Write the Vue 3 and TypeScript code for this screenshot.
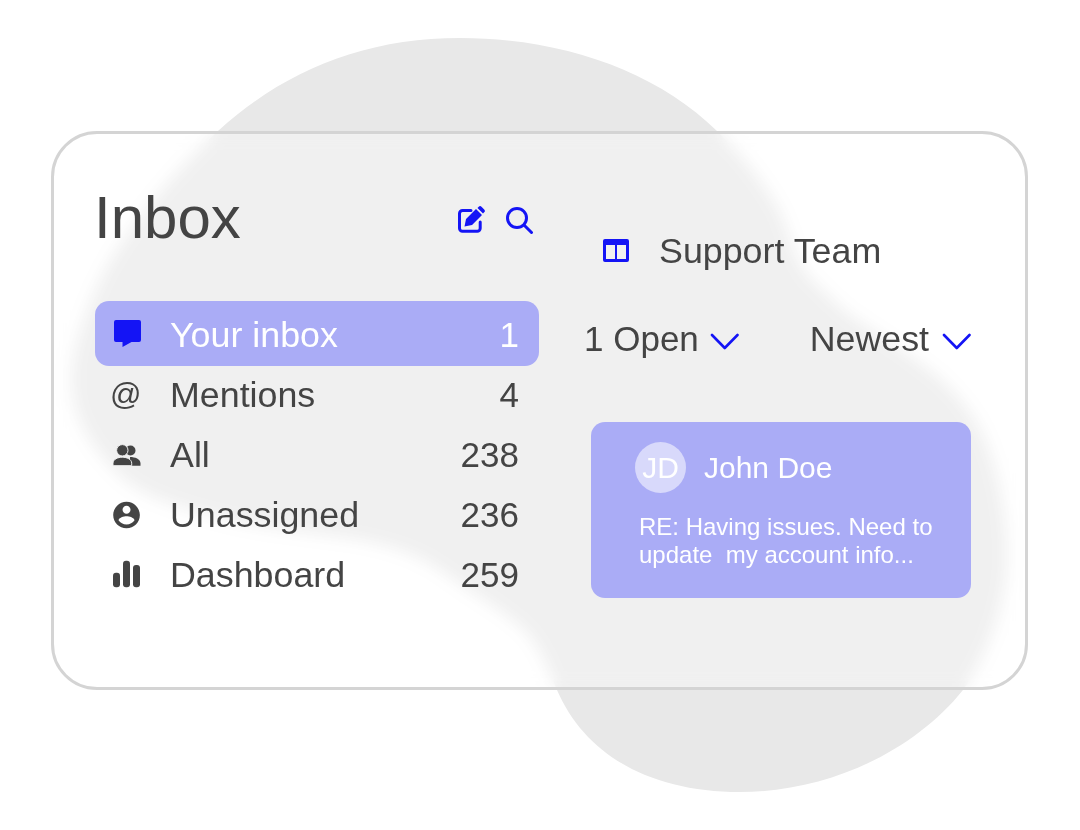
<script setup lang="ts">
interface Row { key: string; label: string; count: number; active?: boolean }
const rows: Row[] = [
  { key: 'chat', label: 'Your inbox', count: 1, active: true },
  { key: 'at', label: 'Mentions', count: 4 },
  { key: 'people', label: 'All', count: 238 },
  { key: 'user', label: 'Unassigned', count: 236 },
  { key: 'bars', label: 'Dashboard', count: 259 },
]
</script>

<template>
  <div class="page">
    <svg class="blob" width="1080" height="830" viewBox="0 0 1080 830" aria-hidden="true">
      <path d="M460 38C560 38 655 70 717 131C750 163 768 190 780 212C790 235 795 262 812 280C828 295 840 308 853 317C875 332 900 347 920 363C945 380 960 398 973 417C995 450 1007 510 1007 555C1007 600 990 650 963 690C915 750 830 792 740 792C650 792 585 755 557 690C548 668 540 648 527 633C512 618 495 607 473 593C455 581 437 566 417 557C400 549 380 544 360 540C310 532 265 530 217 517C170 505 140 495 117 473C90 445 75 420 72 390C70 365 75 345 83 323C92 295 103 272 117 250C140 215 175 170 218 131C285 70 365 38 460 38Z" fill="#e8e8e8" />
    </svg>
    <section class="card">
      <div class="left">
        <header class="head">
          <h1>Inbox</h1>
          <div class="actions">
            <svg width="30" height="30" viewBox="0 0 30 30" fill="none">
              <path d="M16 6.500H7.500a3 3 0 0 0-3 3v14.700a3 3 0 0 0 3 3h14.700a3 3 0 0 0 3-3V18" stroke="#1414f5" stroke-width="3" stroke-linecap="round" />
              <path d="M9.500 22.500l1.500-7.500L21 5l6 6-10 10z M22.500 4l1.200-1.200a2 2 0 0 1 2.800 0l2.700 2.700a2 2 0 0 1 0 2.800l-1.200 1.200z" fill="#1414f5" />
            </svg>
            <svg width="30" height="30" viewBox="0 0 30 30" fill="none">
              <circle cx="13" cy="14" r="9.500" stroke="#1414f5" stroke-width="3" />
              <path d="M20 21l7.500 7.500" stroke="#1414f5" stroke-width="3" stroke-linecap="round" />
            </svg>
          </div>
        </header>
        <ul class="list">
          <li v-for="r in rows" :key="r.key" class="row" :class="{ active: r.active }">
            <span class="ico">
              <svg v-if="r.key === 'chat'" class="chat" width="32" height="30" viewBox="0 0 32 30">
                <path d="M4 3a2 2 0 0 1 2-2h23a2 2 0 0 1 2 2v18a2 2 0 0 1-2 2h-7.500L12.500 28v-5H6a2 2 0 0 1-2-2z" fill="#1414f5" />
              </svg>
              <span v-else-if="r.key === 'at'" class="at">@</span>
              <svg v-else-if="r.key === 'people'" width="32" height="30" viewBox="0 0 32 30">
                <circle cx="20.500" cy="10.500" r="5" fill="#444" />
                <path d="M20 17c5 0 10.500 2 10.500 6.500v2.200H20z" fill="#444" />
                <circle cx="12.300" cy="10.300" r="5.700" fill="#444" stroke="#f0f0f0" stroke-width="1" />
                <path d="M3 25.700v-2.500c0-4 5-6 9.300-6s9.400 2 9.400 6v2.500z" fill="#444" stroke="#f0f0f0" stroke-width="1" />
              </svg>
              <svg v-else-if="r.key === 'user'" width="32" height="32" viewBox="0 0 24 24">
                <path d="M12 2C6.480 2 2 6.480 2 12s4.480 10 10 10 10-4.480 10-10S17.520 2 12 2zm0 3c1.660 0 3 1.340 3 3s-1.340 3-3 3-3-1.340-3-3 1.340-3 3-3zm0 14.200c-2.500 0-4.710-1.280-6-3.220.03-1.990 4-3.080 6-3.080 1.990 0 5.970 1.090 6 3.080-1.290 1.940-3.500 3.220-6 3.220z" fill="#444" transform="translate(.4 0)" />
              </svg>
              <svg v-else width="32" height="30" viewBox="0 0 32 30" fill="#444">
                <rect x="3" y="12.700" width="7" height="14.600" rx="3" />
                <rect x="13" y="0.700" width="7" height="26.600" rx="3" />
                <rect x="23" y="5" width="7" height="22.300" rx="3" />
              </svg>
            </span>
            <span class="label">{{ r.label }}</span>
            <span class="count">{{ r.count }}</span>
          </li>
        </ul>
      </div>

      <div class="right">
        <div class="team">
          <svg width="30" height="30" viewBox="0 0 30 30">
            <path fill-rule="evenodd" d="M3 3h22a2 2 0 0 1 2 2v19a2 2 0 0 1-2 2H3a2 2 0 0 1-2-2V5a2 2 0 0 1 2-2zM4 9v14h9V9zM15 9v14h9V9z" fill="#1414f5" />
          </svg>
          <span>Support Team</span>
        </div>
        <div class="filters">
          <div class="filter">
            <span class="open">1 Open</span>
            <svg class="chev first" width="30" height="18" viewBox="0 0 30 18" fill="none"><path d="M3 2L15.750 15 28.500 2" stroke="#1414f5" stroke-width="2.600" stroke-linecap="round" stroke-linejoin="round" /></svg>
          </div>
          <div class="filter">
            <span>Newest</span>
            <svg class="chev" width="30" height="18" viewBox="0 0 30 18" fill="none"><path d="M3 2L15.750 15 28.500 2" stroke="#1414f5" stroke-width="2.600" stroke-linecap="round" stroke-linejoin="round" /></svg>
          </div>
        </div>
        <article class="conv">
          <div class="who">
            <span class="avatar">JD</span>
            <span class="name">John Doe</span>
          </div>
          <p>RE: Having issues. Need to<br />update&nbsp; my account info...</p>
        </article>
      </div>
    </section>
  </div>
</template>

<style>
html, body { margin: 0; background: #fff; }
</style>

<style scoped>
.page {
  position: relative;
  width: 1080px;
  height: 830px;
  padding: 131px 0 0 51px;
  box-sizing: border-box;
  overflow: hidden;
  background: #fff;
  font-family: "Liberation Sans", Arial, sans-serif;
  color: #444;
}
.blob { position: absolute; left: 0; top: 0; }
.card {
  position: relative;
  box-sizing: border-box;
  width: 977px;
  height: 559px;
  border: 3px solid #d4d4d4;
  border-radius: 46px;
  background: rgba(255, 255, 255, 0.36);
  backdrop-filter: blur(8px);
  padding: 0 54px 0 41px;
  display: flex;
}
.left { width: 444px; }
.head {
  height: 167px;
  display: flex;
  justify-content: space-between;
  align-items: flex-start;
  padding-right: 5px;
  box-sizing: border-box;
}
h1 {
  margin: 49px 0 0 -1px;
  font-size: 60px;
  font-weight: 400;
  line-height: 70px;
}
.actions { display: flex; gap: 19px; margin-top: 70px; }
.list { list-style: none; margin: 0; padding: 0; }
.row {
  height: 60px;
  display: flex;
  align-items: center;
  padding: 0 20px 0 15px;
  font-size: 35.8px;
}
.row.active {
  height: 65px;
  margin-bottom: -1px;
  padding-top: 3px;
  box-sizing: border-box;
  background: #aaacf6;
  border-radius: 14px;
  color: #fff;
}
.chat { margin-top: -3px; }
.ico { width: 60px; display: flex; align-items: center; }
.at { font-size: 31px; line-height: 30px; }
.label { flex: 1; }
.count { font-size: 35px; }
.right { flex: 1; margin-left: 52px; }
.team {
  margin-top: 99px;
  height: 36px;
  display: flex;
  align-items: center;
  gap: 27px;
  font-size: 35.8px;
  padding-left: 11px;
}
.filters {
  margin-top: 52px;
  height: 36px;
  display: flex;
  justify-content: space-between;
  font-size: 35.8px;
  margin-left: -7px;
}
.open { font-size: 35px; }
.filter { display: flex; align-items: center; gap: 12px; }
.chev { margin-top: 6px; }
.chev.first { margin-left: -2px; }
.conv {
  margin-top: 65px;
  height: 176px;
  box-sizing: border-box;
  background: #aaacf6;
  border-radius: 14px;
  color: #fff;
  padding: 20px 0 0 44px;
}
.who { display: flex; align-items: center; gap: 18px; }
.avatar {
  width: 51px;
  height: 51px;
  border-radius: 50%;
  background: #d8d9fb;
  display: flex;
  align-items: center;
  justify-content: center;
  font-size: 30px;
}
.name { font-size: 30px; }
.conv p {
  margin: 20px 0 0 4px;
  font-size: 24px;
  line-height: 28px;
}
</style>
